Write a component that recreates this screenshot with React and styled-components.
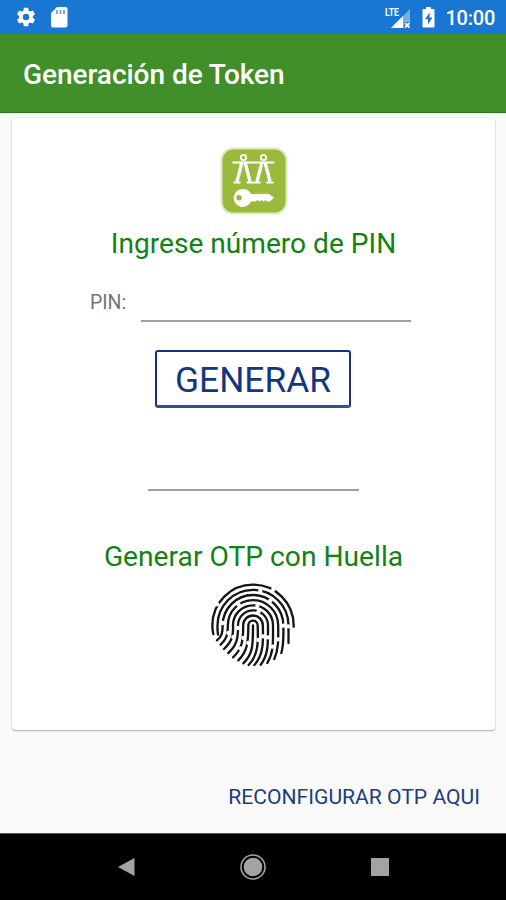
import React from 'react';
import styled, { createGlobalStyle } from 'styled-components';

const Global = createGlobalStyle`
  * { box-sizing: border-box; }
  body { margin: 0; background: #fafafa; font-family: Roboto, "Liberation Sans", sans-serif; }
`;
const Screen = styled.div`
  width: 506px; height: 900px; display: flex; flex-direction: column; background: #fafafa; overflow: hidden;
`;
const StatusBar = styled.header`
  height: 34px; flex: none; display: flex; align-items: center; justify-content: space-between;
  background: #1976d2; padding: 0 11px 0 15px; color: #fff;
`;
const StatusGroup = styled.div`
  display: flex; align-items: center; gap: ${p => p.$gap}px;
`;
const Clock = styled.span`
  font-size: 20px; font-weight: 500; line-height: 34px; letter-spacing: -0.25px; padding-top: 2px;
`;
const AppBar = styled.div`
  height: 79px; flex: none; display: flex; align-items: center; padding-left: 23px;
  background: #408f2a; border-bottom: 1px solid #1f7a17;
`;
const Title = styled.h1`
  margin: 0; color: #fff; font-size: 28px; letter-spacing: -0.04px; font-weight: 500; line-height: 34px; padding-top: 3px; white-space: nowrap;
`;
const Body = styled.main`
  flex: 1; display: flex; flex-direction: column; padding: 5px 11px 0 12px;
`;
const Card = styled.section`
  height: 612px; display: flex; flex-direction: column; align-items: center;
  background: #fff; border-radius: 4px; padding-top: 29px;
  box-shadow: 0 1px 2px rgba(0,0,0,.28), 0 0 1px rgba(0,0,0,.2);
`;
const Heading = styled.h2`
  margin: ${p => p.$top}px 0 0; height: 36px; line-height: 36px; font-size: ${p => p.$size}px;
  font-weight: 400; color: #128212; white-space: nowrap;
`;
const PinRow = styled.label`
  display: flex; align-items: center; width: 321px; height: 60px; margin-right: 6px;
  color: #757575; font-size: 19.5px;
`;
const PinLabel = styled.span`
  width: 51px; padding-top: 21px; line-height: 24px;
`;
const Field = styled.input`
  width: ${p => p.$width}px; height: 40px; padding: 0; border: 0; border-bottom: 2px solid #a0a0a0;
  background: transparent; outline: 0; font: 20px Roboto, sans-serif; border-radius: 0;
`;
const PinField = styled(Field)`align-self: flex-end;`;
const TokenField = styled(Field)`margin-top: 43px;`;
const GenerateButton = styled.button`
  width: 196px; height: 58px; margin: 28px 1px 0 0; padding: 1px 0 0; border: 2px solid #1c2f7e; border-bottom: 3px solid #33508f;
  border-radius: 3px; background: #fff; color: #123780; font: 400 35.3px/54px Roboto, sans-serif;
`;
const Fingerprint = styled.svg`
  display: block; width: 96px; height: 94px; margin: 3px 3px 0 0;
`;
const Reconfigure = styled.button`
  align-self: flex-end; margin: 54px 15px 0 0; padding: 0; border: 0; background: none;
  color: #1b3f80; font: 400 21.1px/26px Roboto, sans-serif; white-space: nowrap;
`;
const NavBar = styled.nav`
  height: 67px; flex: none; display: flex; align-items: center; justify-content: space-between;
  padding: 0 117px 0 116px; background: #000; border-top: 1px solid #555;
`;

const ridges = [
  'M28 168C26 160 25 151 25 142A122 122 0 0 1 269 142V146',
  'M42 170Q40 156 40.5 142A106.5 106.5 0 0 1 253.5 142V195',
  'M39 187C53 176 56 165 56 142A91 91 0 0 1 238 142C239 175 239 200 232 225',
  'M50 200C67 184 72 171 71.5 142A75.5 75.5 0 0 1 222.5 142C223 184 224 212 211 243',
  'M60 213C82 192 89 176 87 142A60 60 0 0 1 207 142C207 190 210 222 190 255',
  'M73 225C98 203 103 180 102 142A45 45 0 0 1 192 142C192 195 194 230 170 260',
  'M87 238C114 213 118 188 117.5 142A29.5 29.5 0 0 1 176.5 142C178 190 179 231 151 261',
  'M103 247C131 219 133 191 133 142A14 14 0 0 1 161 142C163 192 163 231 134 261',
  'M118 256C148 226 147 198 147 142',
];
const breaks = [
  [207, 36], [40, 79],
  [169, 38], [253, 145],
  [56, 135], [199, 68], [238, 143],
  [104, 80], [73, 165], [222, 184],
  [160, 84], [88, 177], [206, 206],
  [164, 100], [102, 150], [192, 178],
  [118, 180], [177, 175], [109, 211],
  [133, 195], [163, 186],
];

function SettingsIcon() {
  return (
    <svg width="22" height="22" viewBox="0 0 24 24" fill="#fff">
      <path d="M19.43 12.98c.04-.32.07-.64.07-.98s-.03-.66-.07-.98l2.11-1.65a.5.5 0 0 0 .12-.64l-2-3.46a.5.5 0 0 0-.61-.22l-2.49 1a7.3 7.3 0 0 0-1.69-.98l-.38-2.65A.49.49 0 0 0 14 2h-4a.49.49 0 0 0-.49.42l-.38 2.65c-.61.25-1.17.59-1.69.98l-2.49-1a.49.49 0 0 0-.61.22l-2 3.46a.49.49 0 0 0 .12.64l2.11 1.65c-.04.32-.07.65-.07.98s.03.66.07.98l-2.11 1.65a.5.5 0 0 0-.12.64l2 3.46c.12.22.39.3.61.22l2.49-1c.52.4 1.08.73 1.69.98l.38 2.65c.03.24.24.42.49.42h4c.25 0 .46-.18.49-.42l.38-2.65a7.3 7.3 0 0 0 1.69-.98l2.49 1c.23.09.49 0 .61-.22l2-3.46a.5.5 0 0 0-.12-.64zM12 15.5a3.5 3.5 0 1 1 0-7 3.5 3.5 0 0 1 0 7z" />
    </svg>
  );
}

function SdCardIcon() {
  return (
    <svg width="18" height="21" viewBox="0 0 18 21">
      <path d="M7 0h8.5a2 2 0 0 1 2 2v16.5a2 2 0 0 1-2 2H3a2 2 0 0 1-2-2V6z" fill="#fff" />
      <path d="M7 3v4M10.5 3v4M14 3v4" stroke="#5d9cde" strokeWidth="1.7" />
    </svg>
  );
}

const LteLabel = styled.text`
  font: 700 11.5px Roboto, sans-serif; fill: #fff;
`;

function SignalIcon() {
  return (
    <svg width="27" height="25" viewBox="0 0 27 25">
      <path d="M25 4V17H19V23H6z" fill="#76afe6" />
      <path d="M18 11V23H6z" fill="#fff" />
      <LteLabel x="0" y="10.5" textLength="14" lengthAdjust="spacingAndGlyphs">LTE</LteLabel>
      <path d="M20 18l4.5 4.5M24.5 18L20 22.5" stroke="#fff" strokeWidth="1.8" />
    </svg>
  );
}

function BatteryIcon() {
  return (
    <svg width="13" height="22" viewBox="0 0 13 22">
      <path d="M4 1h5v2h2.5a1 1 0 0 1 1 1v16.5a1 1 0 0 1-1 1H1.5a1 1 0 0 1-1-1V4a1 1 0 0 1 1-1H4z" fill="#fff" />
      <path d="M7.8 6.5L3 13h3v5.5L10.5 11.5h-3z" fill="#1976d2" />
    </svg>
  );
}

function TokenLogo() {
  return (
    <svg width="68" height="68" viewBox="0 0 68 68">
      <rect x="1.5" y="1.5" width="65" height="65" rx="12" fill="#9aba3b" stroke="#dfe8c3" strokeWidth="2" />
      <g fill="none" stroke="#fff">
        <circle cx="23.5" cy="10.5" r="2.7" strokeWidth="1.8" />
        <circle cx="43.5" cy="10.5" r="2.7" strokeWidth="1.8" />
        <path d="M12.5 15.5H54.5" strokeWidth="2" />
        <path d="M22 15L17 34.5M25 15L30 34.5M42 15L37 34.5M45 15L50 34.5" strokeWidth="3.3" />
        <path d="M13.5 35.5h7M26.5 35.5h7M33.5 35.5h7M46.5 35.5h7" strokeWidth="2" />
      </g>
      <path fillRule="evenodd" d="M23 42a9 9 0 0 1 8 5h18l5 3.5-4 4h-3l-1.5-1.5-2 1.5-2-1.5-2 1.5-2-1.5-2 1.5H31a9 9 0 1 1-8-12.5zM19 48a2.8 2.8 0 1 0 0 5.6 2.8 2.8 0 0 0 0-5.6z" fill="#fff" />
      <path d="M34 46H48" stroke="#b8c919" />
    </svg>
  );
}

export default function App() {
  return (
    <>
      <Global />
      <Screen>
        <StatusBar>
          <StatusGroup $gap={13}><SettingsIcon /><SdCardIcon /></StatusGroup>
          <StatusGroup $gap={10.5}><SignalIcon /><BatteryIcon /><Clock>10:00</Clock></StatusGroup>
        </StatusBar>
        <AppBar><Title>Generación de Token</Title></AppBar>
        <Body>
          <Card>
            <TokenLogo />
            <Heading $top={11} $size={28.1}>Ingrese número de PIN</Heading>
            <PinRow>
              <PinLabel>PIN:</PinLabel>
              <PinField $width={270} type="password" aria-label="PIN" />
            </PinRow>
            <GenerateButton>GENERAR</GenerateButton>
            <TokenField $width={211} readOnly aria-label="Token" />
            <Heading $top={48} $size={28.2}>Generar OTP con Huella</Heading>
            <Fingerprint viewBox="0 0 288 282" fill="none" stroke="#151515" strokeWidth="7" strokeLinecap="round">
              {ridges.map(d => <path key={d} d={d} />)}
              {breaks.map(([x, y]) => <circle key={`${x}-${y}`} cx={x} cy={y} r="6.5" fill="#fff" stroke="none" />)}
            </Fingerprint>
          </Card>
          <Reconfigure>RECONFIGURAR OTP AQUI</Reconfigure>
        </Body>
        <NavBar>
          <svg width="19" height="20" viewBox="0 0 19 20"><path d="M2 10L18.5 1V19z" fill="#a3a3a3" /></svg>
          <svg width="28" height="28" viewBox="0 0 28 28"><circle cx="14" cy="14" r="9.3" fill="#a3a3a3" /><circle cx="14" cy="14" r="12" fill="none" stroke="#a3a3a3" strokeWidth="1.6" /></svg>
          <svg width="18" height="18" viewBox="0 0 18 18"><path d="M0 0H18V18H0z" fill="#a3a3a3" /></svg>
        </NavBar>
      </Screen>
    </>
  );
}
